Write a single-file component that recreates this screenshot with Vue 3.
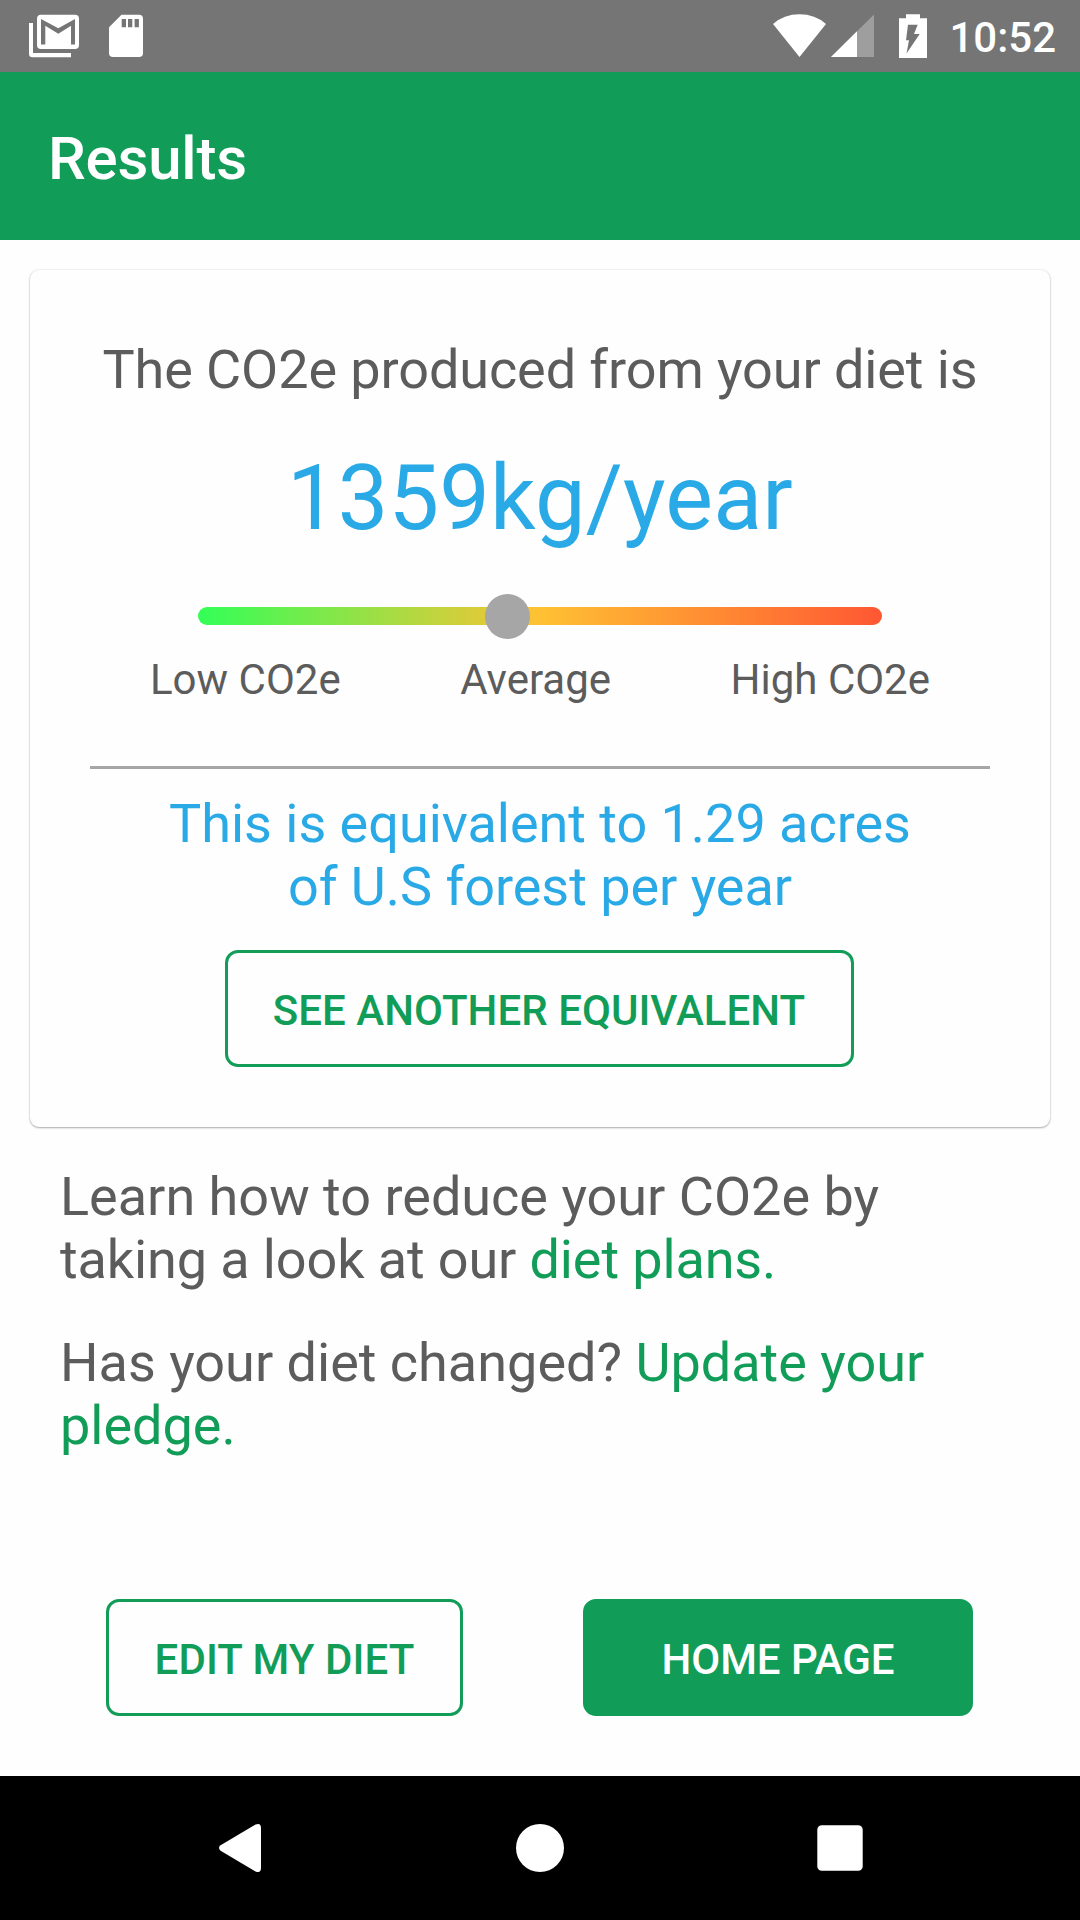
<script setup>
import { ref } from 'vue'

const emissions = ref(1359)
const thumb = ref(45.25)
</script>

<template>
  <div class="screen">
    <header class="status">
      <div class="status-left">
        <svg width="51" height="44" viewBox="29 14 51 44">
          <path fill="#fff" d="M29 23h4v30h38v4.3H32.5a3.5 3.5 0 0 1-3.500-3.500z" />
          <rect x="37" y="14.700" width="42" height="34.300" rx="4" fill="#fff" />
          <path fill="#757575" d="M41 19l17.300 9.200L75 19v25.500h-4V25.800l-12.700 7.900-13-7.900v18.700H41z" />
        </svg>
        <svg width="34" height="44" viewBox="109 14 34 44">
          <path fill="#fff" d="M121.500 14.700H139a4 4 0 0 1 4 4V53a4 4 0 0 1-4 4h-26a4 4 0 0 1-4-4V27.200z" />
          <path fill="#757575" d="M121.700 19h4.300v8.300h-4.300zM128 19h4.300v8.300H128zM134.600 19h4.300v8.300h-4.300z" />
        </svg>
      </div>
      <div class="status-right">
        <svg class="wifi" width="54" height="44" viewBox="773 14 54 44">
          <path fill="#fff" d="M799.500 57L773 24Q784 14.300 799.500 14.300T826 24z" />
        </svg>
        <svg class="signal" width="44" height="44" viewBox="831 14 44 44">
          <path fill="#9e9e9e" d="M831 57L874 14.500V57z" />
          <path fill="#fff" d="M831 57L857 31.300V57z" />
        </svg>
        <svg class="battery" width="28" height="44" viewBox="899 14 28 44">
          <path fill="#fff" d="M906 14.300h14v4h7V58h-28V18.300h7z" />
          <path fill="#757575" d="M908 24.800h9.700l-3.700 9.200h5.700L906.500 53.500l2.500-13.300h-3z" />
        </svg>
        <span class="clock">10:52</span>
      </div>
    </header>

    <div class="appbar"><h1>Results</h1></div>

    <main>
      <section class="card">
        <p class="lead">The CO2e produced from your diet is</p>
        <p class="value">{{ emissions }}kg/year</p>
        <div class="track"><span class="thumb" :style="{ left: thumb + '%' }"></span></div>
        <div class="labels"><span>Low CO2e</span><span>Average</span><span>High CO2e</span></div>
        <hr />
        <p class="equivalent">This is equivalent to 1.29 acres of U.S forest per year</p>
        <button class="btn another">SEE ANOTHER EQUIVALENT</button>
      </section>

      <div class="info">
        <p>Learn how to reduce your CO2e by</p>
        <p class="tight"><span>taking a look at our </span><a>diet plans.</a></p>
      </div>
      <div class="info second">
        <p><span>Has your diet changed? </span><a>Update your</a></p>
        <p><a>pledge.</a></p>
      </div>

      <div class="actions">
        <button class="btn edit">EDIT MY DIET</button>
        <button class="btn home">HOME PAGE</button>
      </div>
    </main>

    <nav class="navbar">
      <svg width="48" height="48" viewBox="0 0 48 48">
        <path fill="#fff" d="M4.600 21.300L39.500 .6Q45 -1.500 45 4V44Q45 49.500 39.500 47.400L4.600 26.700Q1.400 24 4.600 21.300z" />
      </svg>
      <svg width="48" height="48" viewBox="0 0 48 48"><circle cx="24" cy="24" r="24" fill="#fff" /></svg>
      <svg width="48" height="48" viewBox="0 0 48 48"><rect x="1.300" y="1.300" width="45.400" height="45.400" rx="4.500" fill="#fff" /></svg>
    </nav>
  </div>
</template>

<style>
body {
  margin: 0;
  background: #fff;
}
</style>

<style scoped>
.screen {
  width: 1080px;
  height: 1920px;
  display: flex;
  flex-direction: column;
  overflow: hidden;
  background: #fefefe;
  color: #5c5c5c;
  font-family: Roboto, "Liberation Sans", sans-serif;
}
svg {
  display: block;
}
p,
h1 {
  margin: 0;
  font-weight: 400;
}
.status {
  height: 72px;
  box-sizing: border-box;
  padding: 0 24px 0 29px;
  display: flex;
  justify-content: space-between;
  align-items: center;
  background: #757575;
}
.status-left,
.status-right {
  display: flex;
  align-items: center;
}
.status-left {
  gap: 29px;
}
.signal {
  margin-left: 4px;
}
.battery {
  margin: 0 22px 0 24px;
}
.clock {
  color: #fff;
  font-size: 42px;
  line-height: 49px;
  font-weight: 500;
  padding-top: 2px;
}
.appbar {
  height: 168px;
  box-sizing: border-box;
  padding: 5px 48px 0;
  display: flex;
  align-items: center;
  background: #119d58;
}
h1 {
  color: #fff;
  font-size: 60px;
  line-height: 71px;
  font-weight: 500;
  letter-spacing: -0.2px;
}
main {
  flex: 1;
  display: flex;
  flex-direction: column;
}
.card {
  height: 857px;
  box-sizing: border-box;
  margin: 30px 30px 0;
  padding-top: 68px;
  display: flex;
  flex-direction: column;
  align-items: center;
  text-align: center;
  border-radius: 9px;
  background: #fefefe;
  box-shadow: 0 1px 2px rgba(0, 0, 0, 0.3), 0 0 2px rgba(0, 0, 0, 0.14);
}
.lead {
  font-size: 54px;
  line-height: 63px;
  letter-spacing: -0.09px;
}
.value {
  margin-top: 45px;
  color: #29a9e5;
  font-size: 90px;
  line-height: 106px;
  letter-spacing: 0.2px;
}
.track {
  position: relative;
  width: 684px;
  height: 18px;
  margin-top: 55px;
  border-radius: 9px;
  background: linear-gradient(90deg, #33ff57, #ffc133 50%, #ff5733);
}
.thumb {
  position: absolute;
  top: -13px;
  width: 45px;
  height: 45px;
  margin-left: -22.5px;
  border-radius: 50%;
  background: #a6a6a6;
}
.labels {
  width: 780px;
  margin-top: 30px;
  display: flex;
  justify-content: space-between;
  font-size: 42px;
  line-height: 49px;
}
hr {
  width: 900px;
  height: 3px;
  margin: 62px 0 23px;
  border: 0;
  background: #a6a6a6;
}
.equivalent {
  width: 780px;
  color: #29a9e5;
  font-size: 54px;
  line-height: 63px;
  letter-spacing: -0.03px;
}
.btn {
  height: 117px;
  box-sizing: border-box;
  margin: 0;
  padding: 4px 0 0;
  border: 3px solid #119d58;
  border-radius: 13px;
  background: transparent;
  color: #119d58;
  font: 500 42px/49px Roboto, "Liberation Sans", sans-serif;
}
.another {
  width: 629px;
  margin: 32px 2px 0 0;
  letter-spacing: 0.04px;
}
.info {
  margin: 38px 60px 0;
  font-size: 54px;
  line-height: 63px;
  white-space: pre;
}
.info a {
  color: #119d58;
}
.tight {
  letter-spacing: -0.12px;
}
.second {
  margin-top: 40px;
}
.actions {
  margin: 142px 107px 0 106px;
  display: flex;
  justify-content: space-between;
}
.edit {
  width: 357px;
  letter-spacing: 0.08px;
}
.home {
  width: 390px;
  background: #119d58;
  color: #fff;
}
.navbar {
  height: 144px;
  padding: 0 216px;
  display: flex;
  justify-content: space-between;
  align-items: center;
  background: #000;
}
</style>
